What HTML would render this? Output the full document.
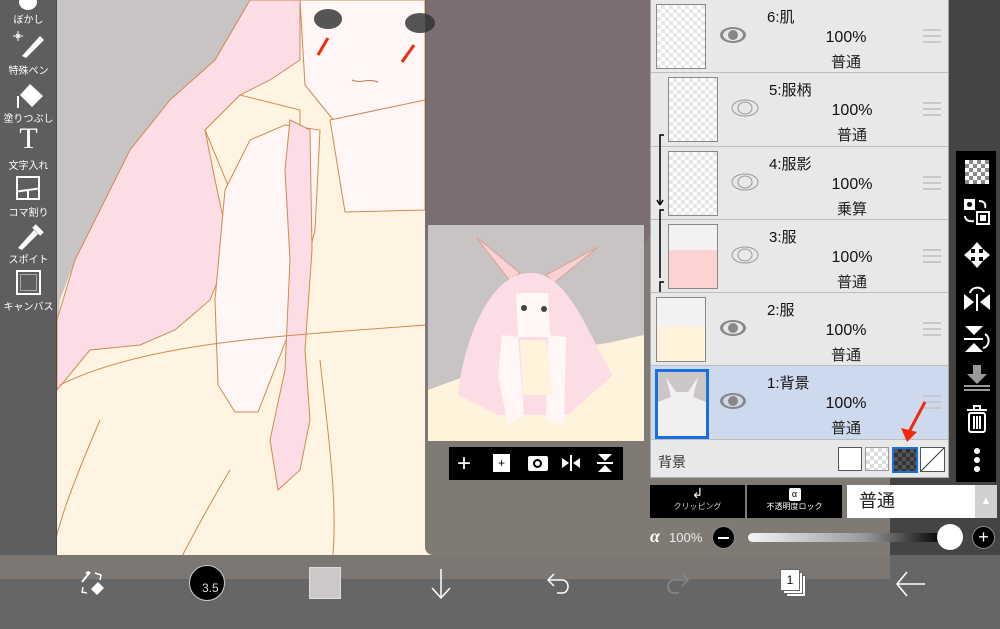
<!DOCTYPE html>
<html><head><meta charset="utf-8"><style>
*{margin:0;padding:0;box-sizing:border-box}
body{width:1000px;height:629px;overflow:hidden;background:#666;font-family:"Liberation Sans","Noto Sans CJK JP",sans-serif;position:relative}
.abs{position:absolute}
.tb{position:absolute;left:0;top:0;width:57px;height:555px;background:#5e5e5e;border-right:1px solid #4a4a4a}
.tl{position:absolute;width:57px;text-align:center;color:#fff;font-size:10px}
.panel{position:absolute;left:650px;top:0;width:299px;height:478px;background:#e8e8e8;border:1px solid #aaa;border-top:none}
.row{position:absolute;left:0;width:297px;height:73px;border-bottom:1px solid #bdbdbd}
.th{position:absolute;top:4px;width:50px;height:65px;border:1px solid #888;background-color:#fff;background-image:linear-gradient(45deg,#e6e6e6 25%,transparent 25%,transparent 75%,#e6e6e6 75%),linear-gradient(45deg,#e6e6e6 25%,transparent 25%,transparent 75%,#e6e6e6 75%);background-size:8px 8px;background-position:0 0,4px 4px}
.nm{position:absolute;top:6px;font-size:15px;color:#111}
.pc{position:absolute;top:29px;font-size:16px;color:#111;left:160px;width:70px;text-align:center}
.md{position:absolute;top:51px;font-size:15px;color:#222;left:160px;width:70px;text-align:center}
.hd{position:absolute;left:272px;top:29px;width:18px;height:14px;border-top:2px solid #c8c8c8;border-bottom:2px solid #c8c8c8}
.hd:after{content:"";position:absolute;left:0;right:0;top:4px;border-top:2px solid #c8c8c8}
.eye{position:absolute;top:26px}
</style></head><body>
<!-- canvas -->
<svg class="abs" style="left:0;top:0" width="890" height="580" viewBox="0 0 890 580">
<rect width="890" height="580" fill="#fff4e2"/>
<polygon points="57,0 250,0 215,60 170,100 130,150 100,210 75,260 60,300 57,330" fill="#c8c4c4"/>
<path d="M425,0 L890,0 L890,200 L780,210 L700,160 L640,250 L560,300 L500,260 L425,240 Z" fill="#f4d6dc"/>
<path d="M250,0 L300,0 L300,60 L270,80 L240,95 L205,130 L215,180 L230,250 L210,300 L175,330 L140,345 L90,350 L57,390 L57,320 L75,260 L100,210 L130,150 L170,100 L215,60 Z" fill="#fcdde6" stroke="#d08a50" stroke-width="1"/>
<path d="M205,130 L240,95 L300,110 L300,190 L230,190 Z" fill="#fff4e2" stroke="#d08a50" stroke-width="1"/>
<path d="M300,0 L425,0 L425,100 L380,125 L335,122 L305,85 Z" fill="#fff6f5" stroke="#d08a50" stroke-width="1"/>
<path d="M330,120 L425,100 L425,210 L345,212 Z" fill="#fff6f5" stroke="#d08a50" stroke-width="1"/>
<path d="M225,190 L250,140 L285,125 L320,130 L315,230 L290,330 L258,412 L235,412 L218,385 L215,300 Z" fill="#fff6f5" stroke="#d08a50" stroke-width="1"/>
<path d="M290,120 L310,130 L312,250 L305,350 L310,420 L300,470 L278,490 L270,440 L285,370 L290,260 L285,170 Z" fill="#fcdde6" stroke="#d08a50" stroke-width="1"/>
<path d="M60,385 C150,340 300,335 425,325 M100,420 C70,490 55,530 50,570 M320,360 C330,450 340,520 330,580 M230,470 C200,520 180,560 170,580" fill="none" stroke="#d08a50" stroke-width="1"/>
<ellipse cx="328" cy="19" rx="14" ry="10" fill="#555"/><ellipse cx="420" cy="23" rx="15" ry="10" fill="#555"/>
<path d="M318,55 L328,38 M402,62 L414,45" stroke="#f02a10" stroke-width="3"/>
<path d="M352,80 C360,84 368,78 378,82" fill="none" stroke="#c07a50"/>
</svg>
<div class="abs" style="left:425px;top:0;width:575px;height:555px;background:rgba(48,46,46,0.62);border-bottom-left-radius:8px"></div>
<div class="abs" style="left:0;top:555px;width:890px;height:24px;background:#7c7772"></div>
<div class="abs" style="left:890px;top:555px;width:110px;height:24px;background:#666"></div>
<div class="abs" style="left:0;top:579px;width:1000px;height:50px;background:#666"></div>
<!-- preview -->
<svg class="abs" style="left:428px;top:225px" width="216" height="216" viewBox="0 0 216 216">
<rect width="216" height="216" fill="#c8c4c4"/>
<path d="M0,165 C40,150 100,128 180,118 L216,110 L216,216 L0,216 Z" fill="#fff3dc"/>
<path d="M48,12 L92,48 L82,56 Z M170,22 L118,50 L126,58 Z" fill="#f7d2d2" stroke="#e0a090"/>
<path d="M30,170 C35,120 60,50 100,48 C140,45 160,110 185,150 L140,190 L70,190 Z" fill="#fcdde6"/>
<path d="M88,68 L120,68 L122,112 L90,112 Z" fill="#fff6f5"/>
<path d="M74,110 L90,112 L96,190 L80,200 L70,150 Z M120,110 L138,112 L136,200 L118,195 Z" fill="#fff6f5"/>
<path d="M92,115 L118,115 L125,170 L95,170 Z" fill="#fff3dc"/>
<circle cx="96" cy="83" r="3" fill="#444"/><circle cx="116" cy="84" r="3" fill="#444"/>
</svg>
<div class="abs" style="left:449px;top:447px;width:174px;height:33px;background:#000;color:#fff;font-size:24px;line-height:33px">
<span class="abs" style="left:8px;top:0">+</span>
<div class="abs" style="left:44px;top:7px;width:17px;height:18px;background:#fff;color:#000;font-size:12px;line-height:18px;text-align:center">+</div>
<div class="abs" style="left:79px;top:9px;width:20px;height:15px;background:#fff;border-radius:2px"><div class="abs" style="left:5px;top:3px;width:9px;height:9px;border:2px solid #000;border-radius:50%"></div></div>
<svg class="abs" style="left:112px;top:6px" width="20" height="20"><path d="M1,5 L8,10 L1,15 Z M19,5 L12,10 L19,15 Z" fill="#fff"/><path d="M10,2 L10,18" stroke="#fff" stroke-width="2"/></svg>
<svg class="abs" style="left:146px;top:6px" width="20" height="20"><path d="M3,1 L17,1 L10,8 Z M3,19 L17,19 L10,12 Z" fill="#fff"/><path d="M2,10 L18,10" stroke="#fff" stroke-width="2"/></svg>
</div>
<!-- left toolbar -->
<div class="tb">
<div class="abs" style="left:19px;top:-6px;width:18px;height:16px;background:#fff;border-radius:50%"></div>
<div class="tl" style="top:11px">ぼかし</div>
<svg class="abs" style="left:10px;top:28px" width="36" height="32"><path d="M12,28 L30,8 L34,12 L16,30 Z" fill="#fff"/><path d="M6,6 L10,10 M10,6 L6,10 M8,3 L8,13 M3,8 L13,8" stroke="#fff"/></svg>
<div class="tl" style="top:62px">特殊ペン</div>
<svg class="abs" style="left:12px;top:82px" width="34" height="28"><path d="M18,2 L31,14 L20,25 L8,13 Z" fill="#fff"/><path d="M6,14 L6,26" stroke="#fff" stroke-width="2"/></svg>
<div class="tl" style="top:110px">塗りつぶし</div>
<div class="tl" style="top:124px;font-size:30px;font-family:'Liberation Serif',serif;line-height:30px">T</div>
<div class="tl" style="top:157px">文字入れ</div>
<div class="abs" style="left:16px;top:176px;width:24px;height:24px;border:2px solid #fff"><div class="abs" style="left:0;top:11px;width:20px;border-top:2px solid #fff;transform:rotate(-8deg)"></div><div class="abs" style="left:9px;top:12px;height:10px;border-left:2px solid #fff"></div></div>
<div class="tl" style="top:204px">コマ割り</div>
<svg class="abs" style="left:14px;top:222px" width="30" height="28"><path d="M4,26 L20,8 L24,12 L8,28 Z" fill="#fff"/><path d="M20,4 L28,12" stroke="#fff" stroke-width="5"/></svg>
<div class="tl" style="top:251px">スポイト</div>
<div class="abs" style="left:16px;top:270px;width:25px;height:25px;border:2px solid #fff;outline:1px solid #aaa;outline-offset:-5px"></div>
<div class="tl" style="top:298px">キャンバス</div>
</div>
<!-- layer panel -->
<div class="panel">
<div class="row" style="top:0"><div class="th" style="left:5px"></div>
<svg class="eye" style="left:68px" width="28" height="18"><ellipse cx="14" cy="9" rx="13" ry="8" fill="#888"/><ellipse cx="14" cy="9" rx="10" ry="6" fill="#e8e8e8"/><circle cx="14" cy="9" r="5" fill="#888"/></svg>
<div class="nm" style="left:116px">6:肌</div><div class="pc">100%</div><div class="md">普通</div><div class="hd"></div></div>
<div class="row" style="top:73px;height:74px"><div class="th" style="left:17px"></div>
<svg class="eye" style="left:80px" width="28" height="18"><ellipse cx="14" cy="9" rx="13" ry="8" fill="none" stroke="#999"/><ellipse cx="14" cy="9" rx="7" ry="6" fill="none" stroke="#999"/></svg>
<div class="nm" style="left:118px">5:服柄</div><div class="pc" style="left:166px">100%</div><div class="md" style="left:166px">普通</div><div class="hd"></div></div>
<div class="row" style="top:147px"><div class="th" style="left:17px"></div>
<svg class="eye" style="left:80px" width="28" height="18"><ellipse cx="14" cy="9" rx="13" ry="8" fill="none" stroke="#999"/><ellipse cx="14" cy="9" rx="7" ry="6" fill="none" stroke="#999"/></svg>
<div class="nm" style="left:118px">4:服影</div><div class="pc" style="left:166px">100%</div><div class="md" style="left:166px">乗算</div><div class="hd"></div></div>
<div class="row" style="top:220px"><div class="th" style="left:17px;background:linear-gradient(#f2f2f2 40%,#fdd2d2 40%)"></div>
<svg class="eye" style="left:80px" width="28" height="18"><ellipse cx="14" cy="9" rx="13" ry="8" fill="none" stroke="#999"/><ellipse cx="14" cy="9" rx="7" ry="6" fill="none" stroke="#999"/></svg>
<div class="nm" style="left:118px">3:服</div><div class="pc" style="left:166px">100%</div><div class="md" style="left:166px">普通</div><div class="hd"></div></div>
<svg class="abs" style="left:4px;top:130px" width="14" height="165"><path d="M9,5 L5,5 L5,75 M5,75 L2,70 M5,75 L8,70 M9,80 L5,80 L5,148 M9,152 L5,152 L5,162" fill="none" stroke="#000" stroke-width="1.5"/></svg>
<div class="row" style="top:293px"><div class="th" style="left:5px;background:linear-gradient(#f2f2f2 45%,#fff3dc 45%)"></div>
<svg class="eye" style="left:68px" width="28" height="18"><ellipse cx="14" cy="9" rx="13" ry="8" fill="#888"/><ellipse cx="14" cy="9" rx="10" ry="6" fill="#e8e8e8"/><circle cx="14" cy="9" r="5" fill="#888"/></svg>
<div class="nm" style="left:116px">2:服</div><div class="pc">100%</div><div class="md">普通</div><div class="hd"></div></div>
<div class="row" style="top:366px;height:74px;background:#cdd9ec"><div class="th" style="left:4px;top:3px;width:54px;height:70px;border:3px solid #1a6fe0;background:#f0f0f0"><svg width="48" height="64"><path d="M0,0 L48,0 L48,30 L35,25 L40,5 L30,20 L18,20 L8,5 L13,25 L0,30 Z" fill="#cbc7c7"/></svg></div>
<svg class="eye" style="left:68px" width="28" height="18"><ellipse cx="14" cy="9" rx="13" ry="8" fill="#888"/><ellipse cx="14" cy="9" rx="10" ry="6" fill="#cdd9ec"/><circle cx="14" cy="9" r="5" fill="#888"/></svg>
<div class="nm" style="left:116px">1:背景</div><div class="pc">100%</div><div class="md">普通</div><div class="hd"></div></div>
<div class="abs" style="left:7px;top:452px;font-size:14px;color:#333">背景</div>
<div class="abs" style="left:187px;top:447px;width:24px;height:24px;background:#fff;border:1px solid #555"></div>
<div class="abs" style="left:214px;top:447px;width:24px;height:24px;border:1px solid #999;background-color:#fff;background-image:linear-gradient(45deg,#ddd 25%,transparent 25%,transparent 75%,#ddd 75%),linear-gradient(45deg,#ddd 25%,transparent 25%,transparent 75%,#ddd 75%);background-size:8px 8px;background-position:0 0,4px 4px"></div>
<div class="abs" style="left:241px;top:447px;width:26px;height:26px;border:2px solid #1a6fe0;background-color:#555;background-image:linear-gradient(45deg,#333 25%,transparent 25%,transparent 75%,#333 75%),linear-gradient(45deg,#333 25%,transparent 25%,transparent 75%,#333 75%);background-size:8px 8px;background-position:0 0,4px 4px"></div>
<svg class="abs" style="left:269px;top:447px" width="25" height="25"><rect x=".5" y=".5" width="24" height="24" fill="#fff" stroke="#555"/><path d="M1,24 L24,1" stroke="#333"/></svg>
<svg class="abs" style="left:248px;top:400px" width="30" height="45"><path d="M26,2 L10,32" stroke="#f02a10" stroke-width="3"/><path d="M2,28 L8,42 L18,32 Z" fill="#f02a10"/></svg>
</div>
<!-- right toolbar -->
<div class="abs" style="left:955px;top:150px;width:42px;height:333px;background:#000;border:1px solid #444"></div>
<div class="abs" style="left:965px;top:160px;width:24px;height:24px;background-color:#fff;background-image:linear-gradient(45deg,#888 25%,transparent 25%,transparent 75%,#888 75%),linear-gradient(45deg,#888 25%,transparent 25%,transparent 75%,#888 75%);background-size:8px 8px;background-position:0 0,4px 4px"></div>
<svg class="abs" style="left:963px;top:198px" width="28" height="28"><rect x="1" y="1" width="11" height="11" fill="#fff"/><circle cx="6.5" cy="6.5" r="2.5" fill="#000"/><rect x="14" y="14" width="12" height="12" fill="none" stroke="#fff" stroke-width="2"/><rect x="17" y="17" width="6" height="6" fill="#fff"/><path d="M16,3 C22,3 23,7 22,10 M2,18 C2,22 6,24 11,23" fill="none" stroke="#fff" stroke-width="2"/></svg>
<svg class="abs" style="left:963px;top:241px" width="28" height="28"><path d="M14,1 L20,8 L8,8 Z M14,27 L20,20 L8,20 Z M1,14 L8,8 L8,20 Z M27,14 L20,8 L20,20 Z" fill="#fff"/><path d="M14,6 L14,22 M6,14 L22,14" stroke="#fff" stroke-width="4"/></svg>
<svg class="abs" style="left:963px;top:284px" width="28" height="28"><path d="M1,10 L11,18 L1,26 Z M27,10 L17,18 L27,26 Z" fill="#fff"/><path d="M14,10 L14,27" stroke="#fff" stroke-width="2"/><path d="M7,9 C9,2 19,2 21,8" fill="none" stroke="#fff" stroke-width="2"/></svg>
<svg class="abs" style="left:963px;top:325px" width="28" height="28"><path d="M2,1 L20,1 L11,10 Z M2,27 L20,27 L11,18 Z" fill="#fff"/><path d="M1,14 L20,14" stroke="#fff" stroke-width="2"/><path d="M22,9 C28,13 26,22 20,23" fill="none" stroke="#fff" stroke-width="2"/></svg>
<svg class="abs" style="left:963px;top:364px" width="28" height="28"><path d="M10,1 L18,1 L18,10 L24,10 L14,20 L4,10 L10,10 Z" fill="#999"/><path d="M1,22 L27,22 M1,26 L27,26" stroke="#999" stroke-width="2"/></svg>
<svg class="abs" style="left:965px;top:404px" width="24" height="30"><path d="M2,6 L22,6 M9,6 L9,2 L15,2 L15,6" stroke="#fff" stroke-width="2" fill="none"/><rect x="4" y="9" width="16" height="19" rx="2" fill="none" stroke="#fff" stroke-width="2"/><path d="M9,12 L9,25 M12,12 L12,25 M15,12 L15,25" stroke="#fff" stroke-width="2"/></svg>
<svg class="abs" style="left:970px;top:446px" width="14" height="30"><circle cx="7" cy="5" r="3" fill="#fff"/><circle cx="7" cy="14" r="3" fill="#fff"/><circle cx="7" cy="23" r="3" fill="#fff"/></svg>
<!-- buttons -->
<div class="abs" style="left:650px;top:485px;width:95px;height:33px;background:#000;color:#ccc;font-size:8px;text-align:center"><div style="font-size:14px;line-height:16px;color:#fff">↲</div><div>クリッピング</div></div>
<div class="abs" style="left:747px;top:485px;width:95px;height:33px;background:#000;color:#fff;font-size:8px;text-align:center"><div style="margin:3px auto 0;width:12px;height:13px;background:#fff;border-radius:2px;color:#000;font-size:9px;line-height:13px">α</div><div>不透明度ロック</div></div>
<div class="abs" style="left:847px;top:485px;width:128px;height:33px;background:#fff;font-size:18px;line-height:33px;padding-left:12px;color:#222">普通</div>
<div class="abs" style="left:975px;top:485px;width:22px;height:33px;background:#d0d0d0;color:#fff;font-size:11px;line-height:33px;text-align:center">▲</div>
<div class="abs" style="left:650px;top:526px;color:#fff;font-size:18px;font-style:italic;font-family:'Liberation Serif',serif;font-weight:bold">α</div>
<div class="abs" style="left:669px;top:530px;color:#eee;font-size:13px">100%</div>
<div class="abs" style="left:712px;top:526px;width:23px;height:23px;border-radius:50%;background:#000;border:1px solid #888"><div class="abs" style="left:5px;top:10px;width:11px;border-top:2px solid #fff"></div></div>
<div class="abs" style="left:748px;top:533px;width:195px;height:9px;border-radius:5px;background:linear-gradient(90deg,#f4f4f4,#999 60%,#000)"></div>
<div class="abs" style="left:937px;top:524px;width:26px;height:26px;border-radius:50%;background:#fff"></div>
<div class="abs" style="left:972px;top:526px;width:23px;height:23px;border-radius:50%;background:#000;border:1px solid #888;color:#fff;text-align:center;line-height:21px;font-size:18px">+</div>
<!-- bottom bar -->
<svg class="abs" style="left:78px;top:570px" width="28" height="28"><path d="M4,12 L12,2 M8,3 L11,2" stroke="#fff" stroke-width="2" fill="none"/><path d="M17,3 L23,5 L22,10" stroke="#fff" stroke-width="1.5" fill="none"/><path d="M5,17 L4,22 L9,23" stroke="#fff" stroke-width="1.5" fill="none"/><path d="M20,12 L26,18 L19,25 L13,19 Z" fill="#fff"/></svg>
<div class="abs" style="left:189px;top:565px;width:36px;height:36px;border-radius:50%;background:#000;border:1px solid #ccc;color:#ddd;font-size:12px;padding:15px 0 0 12px">3.5</div>
<div class="abs" style="left:309px;top:567px;width:32px;height:32px;background:#ccc8c8;border:1px solid #ddd"></div>
<svg class="abs" style="left:429px;top:568px" width="24" height="32"><path d="M12,1 L12,29 M3,20 L12,30 L21,20" stroke="#fff" stroke-width="1.5" fill="none"/></svg>
<svg class="abs" style="left:546px;top:570px" width="26" height="28"><path d="M8,4 L2,10 L8,16 M2,10 L16,10 C24,10 24,23 16,23 L11,23" stroke="#fff" stroke-width="1.5" fill="none"/></svg>
<svg class="abs" style="left:664px;top:570px" width="26" height="28"><path d="M18,4 L24,10 L18,16 M24,10 L10,10 C2,10 2,23 10,23 L15,23" stroke="#888" stroke-width="1.5" fill="none"/></svg>
<div class="abs" style="left:786px;top:575px;width:20px;height:22px;background:#fff;border:1px solid #666"></div>
<div class="abs" style="left:783px;top:572px;width:20px;height:22px;background:#fff;border:1px solid #666"></div>
<div class="abs" style="left:780px;top:569px;width:20px;height:22px;background:#fff;border:1px solid #666;font-size:12px;text-align:center;line-height:20px;color:#000">1</div>
<svg class="abs" style="left:896px;top:570px" width="30" height="28"><path d="M11,2 L1,14 L11,26 M1,14 L29,14" stroke="#fff" stroke-width="1.5" fill="none"/></svg>
</body></html>
